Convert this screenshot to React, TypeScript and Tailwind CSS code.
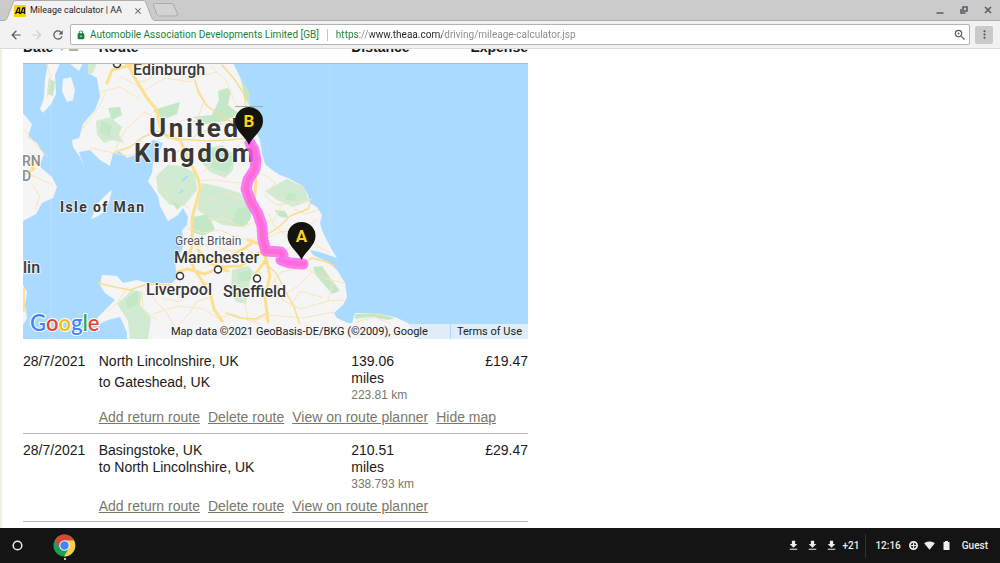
import { useState } from "react";
import {
  MdArrowBack,
  MdArrowForward,
  MdClose,
  MdFileDownload,
  MdLock,
  MdMoreVert,
  MdRefresh,
  MdSignalWifi4Bar,
  MdZoomIn,
} from "react-icons/md";

type Trip = {
  date: string;
  from: string;
  to: string;
  miles: string;
  km: string;
  expense: string;
  actions: string[];
  hasMap: boolean;
};

const TRIPS: Trip[] = [
  {
    date: "28/7/2021",
    from: "North Lincolnshire, UK",
    to: "to Gateshead, UK",
    miles: "139.06",
    km: "223.81 km",
    expense: "£19.47",
    actions: ["Add return route", "Delete route", "View on route planner", "Hide map"],
    hasMap: true,
  },
  {
    date: "28/7/2021",
    from: "Basingstoke, UK",
    to: "to North Lincolnshire, UK",
    miles: "210.51",
    km: "338.793 km",
    expense: "£29.47",
    actions: ["Add return route", "Delete route", "View on route planner"],
    hasMap: false,
  },
];

/** Window title bar with the open tab and the window buttons. */
function TabStrip() {
  return (
    <div className="flex h-[21px] shrink-0 items-stretch border-b border-[#adadad] bg-[#cbcbcb]">
      <div className="relative -mb-px ml-1 h-[21px] w-[151px]">
        <svg className="absolute inset-0 h-full w-full" viewBox="0 0 151 21" aria-hidden="true">
          <path
            d="M0 20.5C3 20 3 18 4 16L9 3C10 1 10 .5 12 .5H139C141 .5 141 1 142 3L147 16C148 18 148 20 151 20.5V21H0Z"
            fill="#f2f2f2"
          />
          <path
            d="M0 20.5C3 20 3 18 4 16L9 3C10 1 10 .5 12 .5H139C141 .5 141 1 142 3L147 16C148 18 148 20 151 20.5"
            fill="none"
            stroke="#adadad"
          />
        </svg>
        <div className="relative flex h-full items-center pr-3 pl-[10px]">
          <svg className="h-3 w-3" viewBox="0 0 12 12" aria-hidden="true">
            <rect width="12" height="12" fill="#fcd200" />
            <path d="M1.5 9 4 3H5.5V9M3 7.3H5M6.5 9 9 3H10.5V9M8 7.3H10" fill="none" stroke="#111" strokeWidth="1.3" />
          </svg>
          <span className="ml-1 flex-1 text-[9px] whitespace-nowrap text-[#222]">Mileage calculator | AA</span>
          <button aria-label="Close tab" className="text-[#555]">
            <MdClose size={10} />
          </button>
        </div>
      </div>
      <button aria-label="New tab" className="-ml-1 self-center">
        <svg className="h-[14px] w-7" viewBox="0 0 28 14">
          <path
            d="M4 .5H20Q22 .5 22.700 2L26.500 11Q27 13 25 13H8.500Q7 13 6.200 11.500L2.300 2.500Q2 .5 4 .5Z"
            fill="#d3d3d3"
            stroke="#a9a9a9"
          />
        </svg>
      </button>
      <div className="ml-auto flex items-center gap-4 pr-2 text-[#5a5d63]">
        <button aria-label="Minimize">
          <svg className="h-2 w-2" viewBox="0 0 8 8">
            <path d="M.5 7H7.500" stroke="currentColor" strokeWidth="1.500" />
          </svg>
        </button>
        <button aria-label="Restore">
          <svg className="h-2 w-2" viewBox="0 0 8 8">
            <path d="M3 1H7V5H3ZM1 3V7H5.500" fill="none" stroke="currentColor" strokeWidth="1.600" />
          </svg>
        </button>
        <button aria-label="Close window">
          <svg className="h-2 w-2" viewBox="0 0 8 8">
            <path d="M1 1 7 7M7 1 1 7" stroke="currentColor" strokeWidth="1.500" />
          </svg>
        </button>
      </div>
    </div>
  );
}

/** Navigation buttons and the address bar. */
function Toolbar() {
  const [url, setUrl] = useState("https://www.theaa.com/driving/mileage-calculator.jsp");

  return (
    <div className="flex h-7 shrink-0 items-center border-b border-[#dcdcdc] bg-[#f2f2f2] pr-[7px] pl-[9px]">
      <div className="flex w-[61px] items-center gap-[7px]">
        <button aria-label="Back" className="text-[#5a5a5a]">
          <MdArrowBack size={14} />
        </button>
        <button aria-label="Forward" className="text-[#cfcfcf]">
          <MdArrowForward size={14} />
        </button>
        <button aria-label="Reload" className="text-[#5a5a5a]">
          <MdRefresh size={14} />
        </button>
      </div>
      <div className="flex h-[21px] flex-1 items-center rounded-xs border border-[#b4b4b4] bg-white pr-[2px] pl-[5px]">
        <button className="flex items-center gap-1 text-[10px] whitespace-nowrap text-[#1a8038]">
          <MdLock size={10} />
          Automobile Association Developments Limited [GB]
        </button>
        <span className="mx-2 h-3 w-px bg-[#c4c4c4]" />
        <input
          aria-label="Address"
          value={url}
          onChange={(e) => setUrl(e.target.value)}
          className="min-w-0 flex-1 bg-[linear-gradient(to_right,#1a8038_24px,#888_24px,#888_34px,#222_34px,#222_106px,#888_106px)] bg-clip-text text-[10px] text-transparent outline-none"
        />
        <button aria-label="Zoom" className="text-[#5a5a5a]">
          <MdZoomIn size={14} />
        </button>
      </div>
      <button
        aria-label="Menu"
        className="ml-[5px] flex h-[18px] w-[18px] items-center justify-center rounded-xs bg-[#cacaca] text-[#5a5a5a]"
      >
        <MdMoreVert size={13} />
      </button>
    </div>
  );
}

function Pin({ x, y, letter }: { x: number; y: number; letter: string }) {
  return (
    <g transform={`translate(${x} ${y})`}>
      <path d="M0 0C-3 -8 -14 -14 -14 -24A14 14 0 0 1 14 -24C14 -14 3 -8 0 0Z" fill="#15130e" />
      <text y="-18" textAnchor="middle" className="fill-[#fcd116] text-[17px] font-bold">
        {letter}
      </text>
    </g>
  );
}

/** Route drawn over northern England and southern Scotland. */
function RouteMap() {
  const route =
    "M250 143L254 150L256 160L255 169L248 180L246 189L251 202L258 214L262 226L263 240L266 251L281 252L283 255L281 260L290 263L303 264";

  return (
    <div className="relative">
      <svg
        className="block h-auto w-full font-[Roboto,sans-serif]"
        viewBox="23 64 505 275"
        role="img"
        aria-label="Map of the route"
      >
        <rect x="23" y="63" width="505" height="277" fill="#aadaff" />

        {/* Land */}
        <g fill="#f5f5f5">
          <path d="M88 63V73L97 78L100 97L95 110L87 119L83 124L79 138L72 140L73 147L80 157L85 169L79 152L90 150L100 160L110 166L113 153L120 152L127 158L135 155L144 148L153 140L163 143L158 155L153 163L152 173L148 181L158 196L160 206L168 221L178 215L183 208L188 217L187 225L182 230L184 240L182 250L175 262L177 278L172 283L148 283L137 280L123 283L117 276L102 275L100 285L105 293L115 300L109 306L98 317L97 325L108 320L120 317L123 323L127 333V340H418L408 323L395 317L375 313L355 313L352 323H348L337 318L334 313L343 305L347 297L345 283L337 270L328 262L313 255L310 250L320 252L337 258L332 250L323 233L320 223L322 215L317 207L310 203L308 195L303 186L288 178L280 175L272 170L265 164L262 153L260 140L254 128L250 107L248 93L240 77L233 63Z" />
          <path d="M48 63H60L55 75L56 94L51 104L43 113L40 109L44 98L45 80Z" />
          <path d="M63 79L71 77L75 90L73 100L67 102L62 91Z" />
          <path d="M69 63H83L79 71Z" />
          <path d="M23 113L32 124L28 137L37 143L44 155L39 166L52 177L57 187L53 198L42 203L36 214L23 221Z" />
          <path d="M91 219L98 203L108 193L112 190L109 202L103 213L96 217Z" />
          <path d="M23 285L27 292L25 305L27 318L23 325Z" />
        </g>

        {/* Uplands and parks */}
        <g fill="#d1ebd3">
          <path d="M96 121L110 117L122 127L119 135L124 143L112 140L104 143L97 135Z" />
          <path d="M156 176L168 165L182 166L195 173L197 190L184 206L170 205L158 192Z" />
          <path d="M198 150L222 145L235 155L233 170L225 178L210 172L200 161Z" />
          <path d="M202 183L217 186L240 193L252 206L250 219L240 227L223 225L208 218L197 209Z" />
          <path d="M265 191L274 186L287 179L304 187L309 201L293 207L277 200Z" />
          <path d="M232 270L248 266L254 272L250 280L246 304L236 302L231 292Z" />
          <path d="M117 304L132 290L142 292L140 305L151 318L148 340H130L128 321Z" />
          <path d="M88 63H97L93 73L88 75Z" />
        </g>
        <g fill="#c3e7c7">
          <path d="M108 108L120 107L122 115L112 120Z" />
          <path d="M153 110L180 102L177 114L163 120Z" />
          <path d="M193 117L212 115L219 100L218 91L227 88L231 91L228 105L238 113L226 121L205 124Z" />
          <path d="M102 121L112 126L110 137L99 132Z" />
          <path d="M206 148L226 148L234 160L228 172L212 168Z" />
          <path d="M237 208L250 206L251 218L245 227L231 225Z" />
          <path d="M193 217L208 214L215 229L203 236L192 232Z" />
          <path d="M171 200L183 204L177 210Z" />
          <path d="M237 273L250 270L251 280L240 282Z" />
          <path d="M274 210L285 211L289 218L280 217Z" />
          <path d="M313 267L322 266L340 291L332 294L315 274Z" />
          <path d="M125 300L138 290L138 304L128 309Z" />
          <path d="M49 78L55 82L53 96L47 94Z" />
          <path d="M355 314L375 313L395 318L389 320L370 317L355 319Z" />
          <path d="M240 77L249 92L250 107L245 98Z" />
          <path d="M285 192L297 194L294 201L284 199Z" />
        </g>
        <path d="M182 181L188 176M180 193L183 190M220 156L228 152" fill="none" stroke="#aadaff" strokeWidth="2" />

        {/* Minor roads */}
        <g fill="none" stroke="#fae5bb" strokeWidth="1">
          <path d="M100 92L120 87L140 99M83 128L98 108L105 94M120 76L145 90L165 78L190 82L205 70M137 83L150 79L158 65M150 148L128 156L90 148M115 150L125 130L145 112L160 122" />
          <path d="M178 136L198 118L204 100L195 82M193 137L220 124L250 123M155 165L172 154L185 148M160 187L178 204L189 207M197 181L216 180L248 184M206 144L213 161L201 174" />
          <path d="M249 171L265 175L275 183L265 196L277 205L302 202L312 199M263 224L275 219L282 205L288 190M263 240L280 232L303 230L317 219M283 253L298 241L312 243L330 253M268 213L274 225L290 239" />
          <path d="M202 211L212 221L226 218L240 227L256 222M187 228L204 233L220 230L240 239L263 239M196 247L213 244L226 251L247 249L259 258M200 205L225 193L253 203" />
          <path d="M142 284L155 300L167 313L180 338M153 314L177 306L204 309L218 318L234 314L252 322L270 315L302 318L334 312M162 298L180 302L193 290L207 283M177 326L190 313L196 302L211 297" />
          <path d="M236 286L244 301L248 318L260 324M270 286L281 272L305 268L326 279L344 283M274 278L283 300L300 309L328 301L344 300M260 295L278 298L298 286L313 271M290 307L300 291L322 297M322 266L333 283L328 301M128 287L117 303L107 312M142 290L143 309L158 321" />
          <path d="M25 130L36 145L48 157M24 173L36 177L53 185M32 185L40 196L35 209M105 200L101 211M46 63L51 76L47 98M356 322L375 317L391 324M294 209L305 214L318 210" />
          <path d="M148 70L167 67L188 79L217 72M210 66L226 80L235 103L252 119M173 124L188 119L201 123" />
        </g>

        {/* A roads and motorways */}
        <g fill="none" stroke="#f8dc90" strokeLinecap="round" strokeLinejoin="round">
          <path d="M115 152L130 147L143 137L158 131L178 139L207 141L228 140L250 138" strokeWidth="1.500" />
          <path d="M195 80L198 92L207 106L220 115L238 126L249 136" strokeWidth="1.500" />
          <path d="M222 65L235 80L244 94L246 105" strokeWidth="1.500" />
          <path d="M98 283L115 287L130 290L147 284L171 285" strokeWidth="1.500" />
          <path d="M268 234L280 226L290 216L308 209L310 203M263 261L276 273L283 286L294 307L300 325" strokeWidth="1.500" />
          <path d="M295 267L312 258L327 262L334 266" strokeWidth="1.500" />
          <path d="M226 313L240 318L255 319L268 313" strokeWidth="1.500" />
        </g>
        <g fill="none" stroke="#fce08f" strokeWidth="3" strokeLinecap="round" strokeLinejoin="round">
          <path d="M127 63L136 80L147 98L157 110L160 127L166 136L180 140L188 158L198 178L200 188L197 200L192 218L192 230L193 244L189 255L194 269L203 282L211 296L214 309L222 321" />
          <path d="M107 83L112 70L127 66L145 64" />
          <path d="M252 162L256 181L254 204L258 219L262 242L266 258L270 276L265 297L268 322" />
          <path d="M177 272L188 269L205 274L220 267L241 266L258 253L278 253M187 259L203 258L219 261L235 254L251 244M198 250L211 264L228 271M248 240L262 245L266 260L256 273" />
          <path d="M23 175L34 169L28 162L39 164" />
        </g>
        <path d="M24 288V312" stroke="#fce08f" strokeWidth="2" />
        <path d="M51 63V339M330 63V339" stroke="#fff" strokeWidth="1" opacity="0.150" />
        <path d="M235 106.500H263" stroke="#aaa" strokeWidth="1" />

        {/* Place names */}
        <g fill="#fff" stroke="#333" strokeWidth="1.500">
          <circle cx="117" cy="64" r="3.500" />
          <circle cx="218" cy="269.500" r="3.500" />
          <circle cx="180" cy="276" r="3.500" />
          <circle cx="257" cy="278.500" r="3.500" />
        </g>
        <g
          className="fill-[#383838] stroke-[#ffffffb3] stroke-2 text-[16px] font-medium [paint-order:stroke]"
          strokeLinejoin="round"
        >
          <text x="133" y="75">Edinburgh</text>
          <text x="149" y="137" className="text-[26px] font-bold tracking-widest">United</text>
          <text x="134" y="162" className="text-[26px] font-bold tracking-widest">Kingdom</text>
          <text x="60" y="212" className="text-[14px] font-bold tracking-widest">Isle of Man</text>
          <text x="175" y="245" className="fill-[#555] text-[12px] font-normal">Great Britain</text>
          <text x="174" y="263">Manchester</text>
          <text x="146" y="295">Liverpool</text>
          <text x="223" y="297">Sheffield</text>
          <text x="23" y="273">lin</text>
          <text x="22" y="166" className="fill-[#8b8b8b] text-[14px]">RN</text>
          <text x="22" y="181" className="fill-[#8b8b8b] text-[14px]">D</text>
        </g>

        <g fill="none" strokeLinejoin="round" strokeLinecap="round">
          <path d={route} stroke="#ff5cf7" strokeWidth="11" opacity="0.800" />
          <path d={route} stroke="#ff5cb4" strokeWidth="5" opacity="0.450" />
        </g>
        <Pin x={249} y={145} letter="B" />
        <Pin x={301.5} y={260} letter="A" />

        <text
          x="30"
          y="331"
          className="stroke-white stroke-2 font-[Lato,sans-serif] text-[22px] font-semibold [paint-order:stroke]"
        >
          <tspan fill="#4285f4">G</tspan>
          <tspan fill="#ea4335">o</tspan>
          <tspan fill="#fbbc05">o</tspan>
          <tspan fill="#4285f4">g</tspan>
          <tspan fill="#34a853">l</tspan>
          <tspan fill="#ea4335">e</tspan>
        </text>
      </svg>
      <div className="absolute right-0 bottom-0 flex h-[15px] items-center gap-px font-[Roboto,sans-serif] text-[11px] leading-[15px] text-[#222]">
        <span className="bg-[#f5f5f5]/70 pr-[22px] pl-[6px]">Map data ©2021 GeoBasis-DE/BKG (©2009), Google</span>
        <a href="#terms" className="bg-[#f5f5f5]/70 px-[6px]">
          Terms of Use
        </a>
      </div>
    </div>
  );
}

function TripRows({ trip }: { trip: Trip }) {
  return (
    <tbody className="border-b border-[#bdbdb3]">
      {trip.hasMap && (
        <tr>
          <td colSpan={4} className="pb-[6px]">
            <RouteMap />
          </td>
        </tr>
      )}
      <tr className="align-top">
        <td className="pt-2">{trip.date}</td>
        <td className="pt-2">
          <div>{trip.from}</div>
          <div className={trip.hasMap ? "mt-1" : ""}>{trip.to}</div>
        </td>
        <td className="pt-2">
          <div>{trip.miles}</div>
          <div>miles</div>
          <div className="text-[12px] leading-4 text-[#7a7768]">{trip.km}</div>
        </td>
        <td className="pt-2 text-right">{trip.expense}</td>
      </tr>
      <tr>
        <td />
        <td colSpan={3} className={trip.hasMap ? "pt-[6px] pb-[7px]" : "py-[6px]"}>
          <div className="flex gap-2 whitespace-nowrap text-[#7a7768]">
            {trip.actions.map((action) => (
              <a key={action} href="#route" className="underline">
                {action}
              </a>
            ))}
          </div>
        </td>
      </tr>
    </tbody>
  );
}

/** ChromeOS shelf with the launcher and the status tray. */
function Shelf() {
  return (
    <footer className="flex h-[35px] shrink-0 items-center bg-[#141414] pr-3 pl-3 text-[10px] font-medium text-[#eee]">
      <button aria-label="Launcher">
        <svg className="h-[11px] w-[11px]" viewBox="0 0 11 11">
          <circle cx="5.500" cy="5.500" r="4.300" fill="none" stroke="#eee" strokeWidth="1.500" />
        </svg>
      </button>
      <button aria-label="Chrome" className="relative ml-[30px]">
        <svg className="h-[23px] w-[23px]" viewBox="0 0 48 48">
          <circle cx="24" cy="24" r="23" fill="#1b9e56" />
          <path d="M24 24 24 13H43.500A23 23 0 0 1 23 47L33.500 29Z" fill="#ffcd40" />
          <path d="M24 24 14.500 29.500 4.500 12A23 23 0 0 1 44 13H24Z" fill="#db4437" />
          <circle cx="24" cy="24" r="11" fill="#f1f1f1" />
          <circle cx="24" cy="24" r="8.800" fill="#4285f4" />
        </svg>
        <span className="absolute -bottom-[3px] left-[11px] h-[2px] w-[2px] rounded-full bg-white" />
      </button>
      <div className="ml-auto flex items-center">
        <div className="flex items-center gap-[6px]">
          <MdFileDownload size={13} />
          <MdFileDownload size={13} />
          <MdFileDownload size={13} />
        </div>
        <span className="ml-1">+21</span>
        <span className="mr-[9px] ml-[6px] h-6 w-px bg-[#333]" />
        <span>12:16</span>
        <svg className="ml-2 h-[9px] w-[9px]" viewBox="0 0 9 9" aria-hidden="true">
          <circle cx="4.500" cy="4.500" r="3.600" fill="none" stroke="#eee" strokeWidth="1.800" />
          <path d="M4.500 2V7M2 4.500H7" stroke="#eee" strokeWidth="1.200" />
        </svg>
        <MdSignalWifi4Bar className="ml-[6px]" size={11} />
        <svg className="ml-2 h-[9px] w-[7px]" viewBox="0 0 7 9" aria-hidden="true">
          <path d="M.5 1H2V0H5V1H6.500V9H.5Z" fill="#eee" />
        </svg>
        <button className="ml-3">Guest</button>
      </div>
    </footer>
  );
}

export default function App() {
  return (
    <div className="flex h-screen flex-col overflow-hidden bg-white font-[Roboto,sans-serif]">
      <TabStrip />
      <Toolbar />

      <main className="min-h-0 flex-1 overflow-hidden border-l-2 border-[#f3eee2] pl-[21px] font-['Liberation_Sans',sans-serif] text-[14px] leading-[17px] text-[#1a1a1a]">
        {/* The page is scrolled so that the toolbar cuts the heading row */}
        <table className="-mt-[10px] w-full max-w-[505px] table-fixed border-collapse">
          <colgroup>
            <col className="w-[15%]" />
            <col className="w-[50%]" />
            <col className="w-[17%]" />
            <col />
          </colgroup>
          <thead className="border-b border-[#bdbdb3] text-left">
            <tr>
              <th className="pb-[7px]">
                <div className="flex items-center gap-[6px]">
                  Date
                  <svg className="h-2 w-5" viewBox="0 0 20 8" aria-hidden="true">
                    <path d="M0 3H6L3 7ZM10 4H19V7H10Z" fill="#b5b1a0" />
                  </svg>
                </div>
              </th>
              <th className="pb-[7px]">Route</th>
              <th className="pb-[7px]">Distance</th>
              <th className="pb-[7px] text-right">Expense</th>
            </tr>
          </thead>
          {TRIPS.map((trip) => (
            <TripRows key={trip.from} trip={trip} />
          ))}
        </table>
      </main>

      <Shelf />
    </div>
  );
}
